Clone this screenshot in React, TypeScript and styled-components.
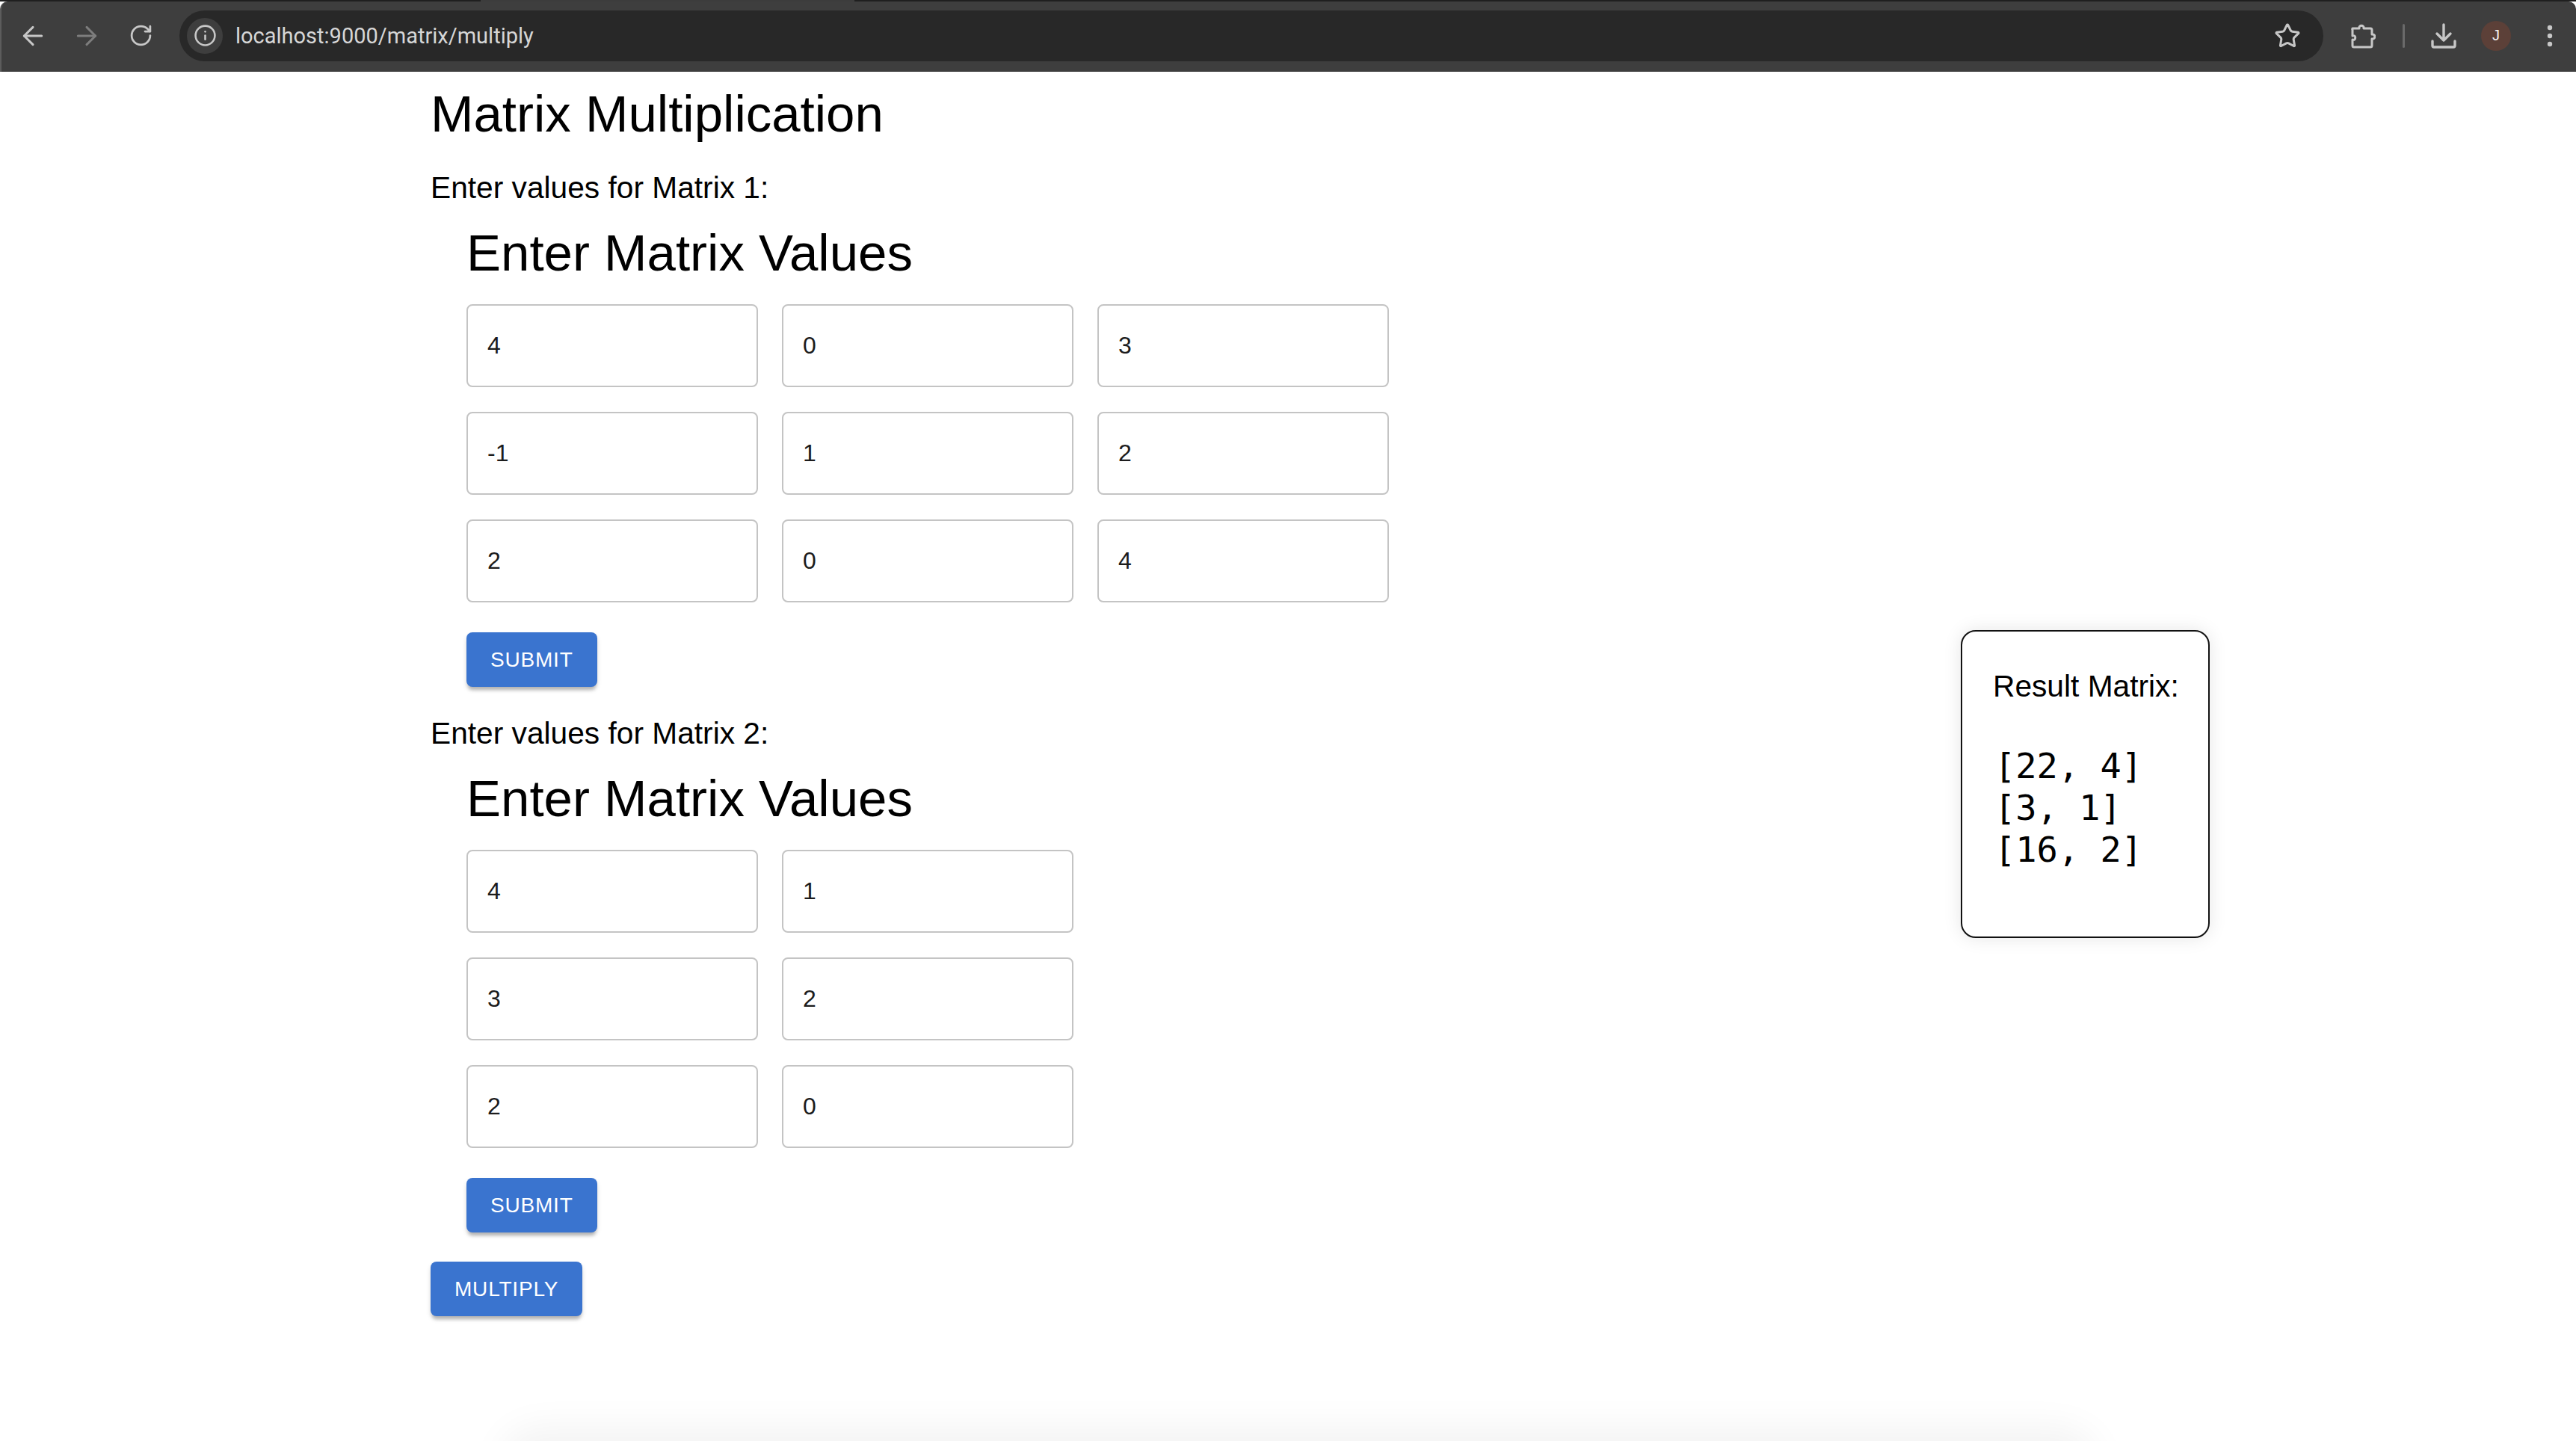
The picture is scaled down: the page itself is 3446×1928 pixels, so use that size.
import React from "react";
import styled, { createGlobalStyle } from "styled-components";
import { ArrowLeft, ArrowRight, Info, RotateCw, Star } from "lucide-react";

const GlobalStyle = createGlobalStyle`
  html, body {
    margin: 0;
    padding: 0;
    background: #fff;
    overflow: hidden;
  }
  body {
    font-family: "Liberation Sans", Arial, sans-serif;
    color: #000;
  }
`;

const Shell = styled.div`
  width: 3446px;
  height: 1928px;
  position: relative;
  overflow: hidden;
  background: #fff;
`;

const TabEdge = styled.div`
  height: 2px;
  background: linear-gradient(to right, #1f1f1f 0, #1f1f1f 643px, #3c3c3c 643px, #3c3c3c 1143px, #1f1f1f 1143px);
`;

const Toolbar = styled.header`
  height: 94px;
  box-sizing: border-box;
  display: flex;
  align-items: center;
  padding: 0 0 3px 6px;
  background: #3e3e3e;
  border-left: 2px solid #5c5c5c;
  border-radius: 10px 10px 0 0;
  color: #c7c7c7;
`;

const NavButton = styled.span<{ $dim?: boolean }>`
  width: 72px;
  height: 48px;
  display: flex;
  align-items: center;
  justify-content: center;
  color: ${(p) => (p.$dim ? "#7d7d7d" : "#c7c7c7")};
`;

const AddressBar = styled.div`
  width: 2868px;
  height: 68px;
  margin-left: 16px;
  box-sizing: border-box;
  padding: 0 30px 0 10px;
  display: flex;
  align-items: center;
  background: #282828;
  border-radius: 34px;
`;

const SiteChip = styled.span`
  width: 48px;
  height: 48px;
  display: flex;
  align-items: center;
  justify-content: center;
  background: #3e3e3e;
  border-radius: 50%;
`;

const Url = styled.span`
  flex: 1;
  margin-left: 17px;
  font-family: Roboto, "Liberation Sans", sans-serif;
  font-size: 29px;
  color: #d6d6d6;
`;

const ToolIcons = styled.div`
  display: flex;
  align-items: center;
  margin-left: 36px;
`;

const Divider = styled.span`
  width: 3px;
  height: 32px;
  margin: 0 35px 0 36px;
  background: #6a6a6a;
  border-radius: 2px;
`;

const Avatar = styled.span`
  width: 40px;
  height: 40px;
  margin-left: 33px;
  display: flex;
  align-items: center;
  justify-content: center;
  background: #5c4038;
  border-radius: 50%;
  font-size: 20px;
  color: #f2f2f2;
`;

const MenuSlot = styled.span`
  margin-left: 48px;
  display: flex;
`;

const Page = styled.main`
  display: flex;
  align-items: flex-start;
  padding-left: 576px;
`;

const Content = styled.section`
  width: 2047px;
  flex-shrink: 0;
`;

const Title = styled.h1`
  margin: 0 0 36px;
  padding-top: 18px;
  font-size: 69px;
  font-weight: 400;
  line-height: 78px;
`;

const MatrixBlock = styled.div`
  margin-bottom: 39px;
`;

const MatrixLabel = styled.p`
  margin: 0;
  font-size: 40.7px;
  line-height: 46px;
`;

const MatrixForm = styled.div`
  padding: 26px 0 0 48px;
`;

const FormTitle = styled.h2`
  margin: 0 0 29px;
  font-size: 69px;
  font-weight: 400;
  line-height: 78px;
`;

const Grid = styled.div<{ $cols: number }>`
  display: grid;
  grid-template-columns: repeat(${(p) => p.$cols}, 390px);
  grid-auto-rows: 111px;
  column-gap: 32px;
  row-gap: 33px;
`;

const Cell = styled.input`
  width: 100%;
  height: 100%;
  box-sizing: border-box;
  padding: 0 26px;
  border: 2px solid #c4c4c4;
  border-radius: 8px;
  outline: none;
  background: #fff;
  font-family: "Liberation Sans", Arial, sans-serif;
  font-size: 32px;
  color: #1c1c1c;
`;

const Button = styled.button`
  display: block;
  height: 73px;
  padding: 0 32px;
  border: none;
  border-radius: 8px;
  background: #3a74cf;
  box-shadow: 0 6px 4px -2px rgba(0, 0, 0, 0.2), 0 4px 6px 0 rgba(0, 0, 0, 0.14);
  font-family: "Liberation Sans", Arial, sans-serif;
  font-size: 28px;
  letter-spacing: 0.8px;
  color: #fff;
`;

const SubmitButton = styled(Button)`
  margin-top: 40px;
`;

const ResultCard = styled.aside`
  width: 333px;
  height: 412px;
  margin-top: 747px;
  box-sizing: border-box;
  padding: 50px 30px 0 41px;
  border: 2px solid #111;
  border-radius: 20px;
  background: #fff;
  box-shadow: 0 0 24px rgba(0, 0, 0, 0.1);
`;

const ResultTitle = styled.div`
  font-size: 40.7px;
  line-height: 46px;
  white-space: nowrap;
`;

const ResultRows = styled.pre`
  margin: 56px 0 0 2px;
  font-family: "DejaVu Sans Mono", monospace;
  font-size: 47px;
  line-height: 56px;
`;

const BottomGlow = styled.div`
  position: absolute;
  left: 690px;
  right: 660px;
  top: 1930px;
  height: 60px;
  border-radius: 40px;
  box-shadow: 0 0 50px 20px rgba(0, 0, 0, 0.05);
`;

const PuzzleIcon = () => (
  <svg width="34" height="34" viewBox="0 0 34 34" fill="none" stroke="#c7c7c7" strokeWidth="3" strokeLinejoin="round">
    <path d="M3 7h9c-1-5 7-5 6 0h9a2 2 0 0 1 2 2v6c5-1 5 7 0 6v9a2 2 0 0 1-2 2H5a2 2 0 0 1-2-2v-8c5 2 5-7 0-5V9a2 2 0 0 1 0-2z" />
  </svg>
);

const DownloadIcon = () => (
  <svg width="34" height="34" viewBox="0 0 34 34" fill="none" stroke="#c7c7c7" strokeWidth="3.4" strokeLinecap="round" strokeLinejoin="round">
    <path d="M17 2v21M8 14l9 9 9-9M2 24v6a2 2 0 0 0 2 2h26a2 2 0 0 0 2-2v-6" />
  </svg>
);

const MoreIcon = () => (
  <svg width="8" height="30" viewBox="0 0 8 30" fill="#c7c7c7">
    <circle cx="4" cy="4" r="3.2" />
    <circle cx="4" cy="15" r="3.2" />
    <circle cx="4" cy="26" r="3.2" />
  </svg>
);

const matrixOne = [["4", "0", "3"], ["-1", "1", "2"], ["2", "0", "4"]];
const matrixTwo = [["4", "1"], ["3", "2"], ["2", "0"]];

const MatrixInput = ({ label, rows }: { label: string; rows: string[][] }) => (
  <MatrixBlock>
    <MatrixLabel>{label}</MatrixLabel>
    <MatrixForm>
      <FormTitle>Enter Matrix Values</FormTitle>
      <Grid $cols={rows[0].length}>
        {rows.flat().map((v, i) => (
          <Cell key={i} defaultValue={v} />
        ))}
      </Grid>
      <SubmitButton>SUBMIT</SubmitButton>
    </MatrixForm>
  </MatrixBlock>
);

export default function App() {
  return (
    <Shell>
      <GlobalStyle />
      <TabEdge />
      <Toolbar>
        <NavButton><ArrowLeft size={40} strokeWidth={1.8} /></NavButton>
        <NavButton $dim><ArrowRight size={40} strokeWidth={1.8} /></NavButton>
        <NavButton><RotateCw size={33} strokeWidth={2} /></NavButton>
        <AddressBar>
          <SiteChip><Info size={31} strokeWidth={2} /></SiteChip>
          <Url>localhost:9000/matrix/multiply</Url>
          <Star size={36} strokeWidth={2} />
        </AddressBar>
        <ToolIcons>
          <PuzzleIcon />
          <Divider />
          <DownloadIcon />
          <Avatar>J</Avatar>
          <MenuSlot><MoreIcon /></MenuSlot>
        </ToolIcons>
      </Toolbar>
      <Page>
        <Content>
          <Title>Matrix Multiplication</Title>
          <MatrixInput label="Enter values for Matrix 1:" rows={matrixOne} />
          <MatrixInput label="Enter values for Matrix 2:" rows={matrixTwo} />
          <Button>MULTIPLY</Button>
        </Content>
        <ResultCard>
          <ResultTitle>Result Matrix:</ResultTitle>
          <ResultRows>{"[22, 4]\n[3, 1]\n[16, 2]"}</ResultRows>
        </ResultCard>
      </Page>
      <BottomGlow />
    </Shell>
  );
}
